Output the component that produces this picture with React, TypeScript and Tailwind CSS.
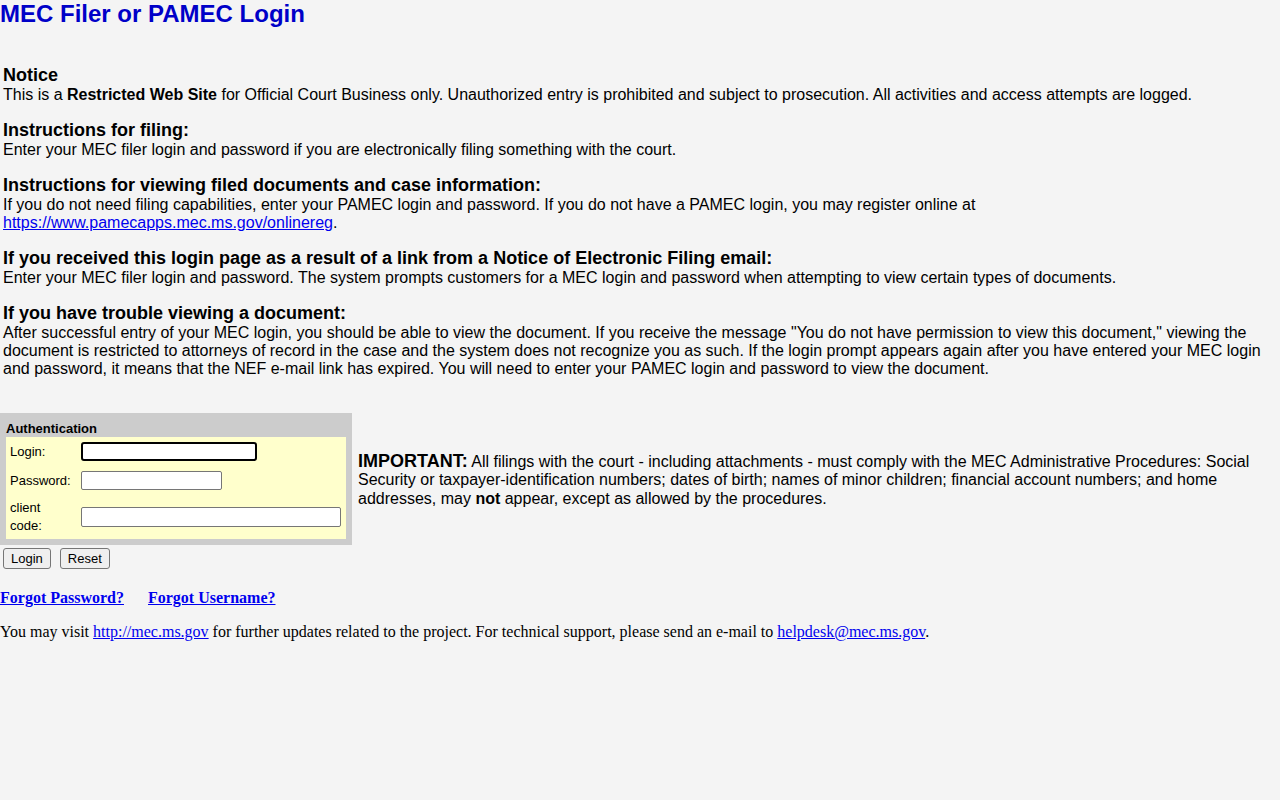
export default function App() {
  return (
    <div className="min-h-[800px] bg-[#f4f4f4] font-['Liberation_Sans',Arial,sans-serif] text-black">
      <h1 className="m-0 text-[24px] font-bold leading-[28px] text-[#0000c8]">MEC Filer or PAMEC Login</h1>

      <div className="mt-[37px] flex flex-col gap-[16px] px-[3px]">
        <Section title="Notice">
          This is a <b>Restricted Web Site</b> for Official Court Business only. Unauthorized entry is prohibited and
          subject to prosecution. All activities and access attempts are logged.
        </Section>
        <Section title="Instructions for filing:">
          Enter your MEC filer login and password if you are electronically filing something with the court.
        </Section>
        <Section title="Instructions for viewing filed documents and case information:">
          If you do not need filing capabilities, enter your PAMEC login and password. If you do not have a PAMEC login,
          you may register online at
          <br />
          <a href="#" className="text-[#0000ee] underline">
            https://www.pamecapps.mec.ms.gov/onlinereg
          </a>
          .
        </Section>
        <Section title="If you received this login page as a result of a link from a Notice of Electronic Filing email:">
          Enter your MEC filer login and password. The system prompts customers for a MEC login and password when
          attempting to view certain types of documents.
        </Section>
        <Section title="If you have trouble viewing a document:">
          After successful entry of your MEC login, you should be able to view the document. If you receive the message
          "You do not have permission to view this document," viewing the document is restricted to attorneys of record
          in the case and the system does not recognize you as such. If the login prompt appears again after you have
          entered your MEC login and password, it means that the NEF e-mail link has expired. You will need to enter
          your PAMEC login and password to view the document.
        </Section>
      </div>

      <div className="mt-[35px] flex items-center">
        <div className="w-[352px] shrink-0 bg-[#cccccc] px-[6px] pb-[6px]">
          <div className="h-[24px] pt-[8px] text-[13px] font-bold leading-[15px]">Authentication</div>
          <div className="bg-[#ffffcc] text-[13px]">
            <Row label="Login:" h="h-[29px]">
              <input className="h-[19px] w-[176px] rounded-[3px] border-2 border-black bg-white outline-none" />
            </Row>
            <Row label="Password:" h="h-[29px]">
              <input
                type="password"
                className="h-[19px] w-[141px] rounded-[2px] border border-[#767676] bg-white outline-none"
              />
            </Row>
            <Row label={<>client<br />code:</>} h="h-[44px]">
              <input className="h-[20px] w-[260px] rounded-[2px] border border-[#767676] bg-white outline-none" />
            </Row>
          </div>
        </div>
        <p className="m-0 flex-1 pl-[6px] pr-[3px] pt-[2px] text-[16px] leading-[18.5px]">
          <b className="text-[18px]">IMPORTANT:</b> All filings with the court - including attachments - must comply
          with the MEC Administrative Procedures: Social Security or taxpayer-identification numbers; dates of birth;
          names of minor children; financial account numbers; and home addresses, may <b>not</b> appear, except as
          allowed by the procedures.
        </p>
      </div>

      <div className="mt-[3px] flex gap-[9px] pl-[3px]">
        <Button>Login</Button>
        <Button>Reset</Button>
      </div>

      <div className="mt-[20px] flex gap-[24px] font-['Liberation_Serif','Times_New_Roman',serif] text-[16px] font-bold leading-[18px]">
        <a href="#" className="text-[#0000ee] underline">
          Forgot Password?
        </a>
        <a href="#" className="text-[#0000ee] underline">
          Forgot Username?
        </a>
      </div>

      <p className="m-0 mt-[16px] font-['Liberation_Serif','Times_New_Roman',serif] text-[16px] leading-[18px]">
        You may visit{' '}
        <a href="#" className="text-[#0000ee] underline">
          http://mec.ms.gov
        </a>{' '}
        for further updates related to the project. For technical support, please send an e-mail to{' '}
        <a href="#" className="text-[#0000ee] underline">
          helpdesk@mec.ms.gov
        </a>
        .
      </p>
    </div>
  );
}

function Section({ title, children }: { title: string; children: React.ReactNode }) {
  return (
    <div>
      <div className="text-[18px] font-bold leading-[21px]">{title}</div>
      <div className="text-[16px] leading-[18px]">{children}</div>
    </div>
  );
}

function Row({ label, h, children }: { label: React.ReactNode; h: string; children: React.ReactNode }) {
  return (
    <div className={`flex items-center ${h}`}>
      <div className="w-[75px] shrink-0 pl-[4px] leading-[18px]">{label}</div>
      {children}
    </div>
  );
}

function Button({ children }: { children: React.ReactNode }) {
  return (
    <button className="h-[21px] rounded-[3px] border border-[#767676] bg-[#efefef] px-[7px] text-[13px] leading-[15px]">
      {children}
    </button>
  );
}
